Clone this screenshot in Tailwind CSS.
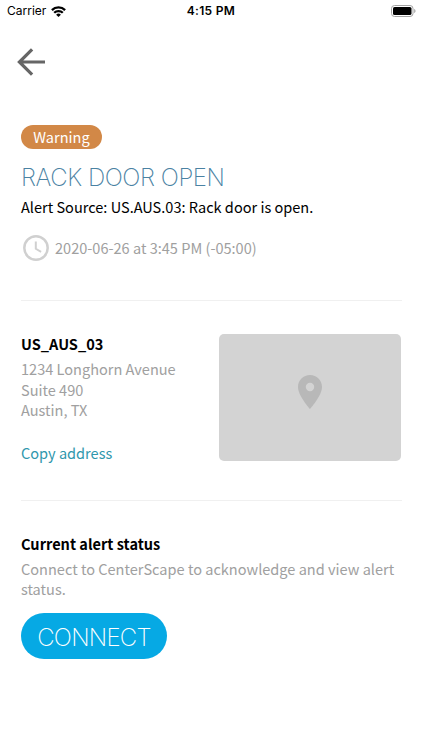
<!DOCTYPE html>
<html lang="en">
<head>
  <meta charset="UTF-8">
  <meta name="viewport" content="width=device-width, initial-scale=1.0">
  <title>Rack Door Open</title>
  <script src="https://cdn.jsdelivr.net/npm/@tailwindcss/browser@4"></script>
</head>
<body class="bg-white min-h-screen overflow-hidden font-['Noto_Sans_CJK_SC',sans-serif] text-[14.55px] leading-5 text-black">
  <!-- Status bar -->
  <div class="grid grid-cols-3 items-center h-[22px] pl-[7px] pr-[6px] font-['Inter',sans-serif] text-xs">
    <div class="flex items-center gap-[5px]">
      <span>Carrier</span>
      <svg class="w-[15px] h-[11px]" viewBox="0 0 15 11" fill="none" stroke="#000" stroke-width="2.3">
        <path d="M.9 4.1a9.4 9.4 0 0 1 13.2 0M3.2 6.8a6.1 6.1 0 0 1 8.6 0" />
        <path d="M7.5 10.9 5.1 8.7a3.5 3.5 0 0 1 4.8 0z" fill="#000" stroke="none" />
      </svg>
    </div>
    <span class="pr-[1px] text-center font-semibold tracking-[0.3px]">4:15 PM</span>
    <svg class="w-[25px] h-[12px] justify-self-end" viewBox="0 0 25 12">
      <rect x=".5" y=".5" width="21.5" height="11" rx="3" fill="none" stroke="#a3a3a3" />
      <rect x="2" y="2" width="18.5" height="8" rx="1.6" />
      <path d="M23.2 4v4c.8-.3 1.3-1.1 1.3-2s-.5-1.7-1.3-2z" fill="#a3a3a3" />
    </svg>
  </div>

  <button class="block mt-[26px] ml-[17px]" aria-label="Back">
    <svg class="w-7 h-7" viewBox="0 0 28 28" fill="none" stroke="#666" stroke-width="3.2">
      <path d="M28 14H3M15.1 1.3 2.4 14l12.7 12.7" />
    </svg>
  </button>

  <main class="px-[21px] pt-[49px]">
    <!-- Alert -->
    <section class="h-[176px] -mr-px border-b border-[#f0f0f0]">
      <span class="flex items-center justify-center w-[81px] h-[24px] rounded-full bg-[#d28847] text-white">Warning</span>
      <h1 class="mt-[13px] h-8 leading-8 font-['Inter',sans-serif] font-extralight text-[24px] tracking-[-0.45px] text-[#4a82a3] whitespace-nowrap">RACK DOOR OPEN</h1>
      <p class="mt-[3px] whitespace-nowrap">Alert Source: US.AUS.03: Rack door is open.</p>
      <div class="flex items-center mt-[18px] gap-[6px] pl-[2px] text-[#a0a0a0]">
        <svg class="w-[26px] h-[26px]" viewBox="0 0 26 26" fill="none" stroke="#d0d0d0">
          <circle cx="13" cy="13" r="11.7" stroke-width="2.5" />
          <path d="M12.8 6.5v7.3l5.3 3.1" stroke-width="2" />
        </svg>
        <span class="whitespace-nowrap">2020-06-26 at 3:45 PM (-05:00)</span>
      </div>
    </section>

    <!-- Location -->
    <section class="flex justify-between h-[200px] -mr-px pr-px pt-[33px] border-b border-[#f0f0f0]">
      <div>
        <h2 class="font-bold">US_AUS_03</h2>
        <p class="mt-[5px] leading-[20.5px] text-[#a0a0a0]">1234 Longhorn Avenue<br>Suite 490<br>Austin, TX</p>
        <a href="#" class="block mt-[22px] text-[#2f97ad]">Copy address</a>
      </div>
      <div class="flex justify-center w-[182px] h-[127px] rounded-[5px] bg-[#d3d3d3]">
        <svg class="w-6 h-[34px] mt-[41px]" viewBox="0 0 24 34">
          <path d="M12 0C5.3 0 0 5.3 0 12c0 8.8 12 22 12 22s12-13.2 12-22C24 5.3 18.7 0 12 0zm0 16.2a4.2 4.2 0 1 1 0-8.4 4.2 4.2 0 0 1 0 8.4z" fill="#b8b8b8" />
        </svg>
      </div>
    </section>

    <!-- Status -->
    <section class="pt-[33px]">
      <h2 class="font-bold">Current alert status</h2>
      <p class="mt-[5px] leading-[20px] text-[#a0a0a0] whitespace-nowrap">Connect to CenterScape to acknowledge and view alert<br>status.</p>
      <button class="flex items-center justify-center mt-[14px] w-[146px] h-[46px] pt-[3px] rounded-full bg-[#06a9e4] font-['Inter',sans-serif] font-extralight text-[24px] tracking-[-0.75px] text-white">CONNECT</button>
    </section>
  </main>
</body>
</html>
